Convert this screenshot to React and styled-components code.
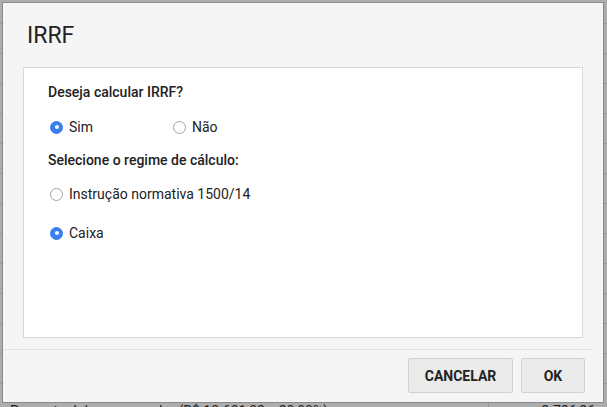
import React from "react";
import styled, { createGlobalStyle } from "styled-components";

const GlobalStyle = createGlobalStyle`
  html, body {
    margin: 0;
    padding: 0;
    width: 607px;
    height: 407px;
    overflow: hidden;
    font-family: Roboto, "Liberation Sans", sans-serif;
  }
`;

const Page = styled.div`
  position: relative;
  width: 607px;
  height: 407px;
  overflow: hidden;
  background: #ffffff;
`;

const Table = styled.div`
  display: flex;
  flex-direction: column;
`;

const HeadRow = styled.div`
  height: 24px;
  border-bottom: 1px solid #e2e2e2;
  box-sizing: border-box;
`;

const Row = styled.div`
  display: flex;
  height: 30px;
  box-sizing: border-box;
  border-bottom: 1px solid #e2e2e2;
  font-size: 14px;
  color: #333;
  padding-top: ${(p) => (p.$low ? "19px" : "8px")};
`;

const Cell = styled.div`
  flex: 1;
  padding-left: 10px;
`;

const NumCell = styled.div`
  width: 106px;
  border-left: 1px solid #e2e2e2;
  text-align: right;
  padding-right: 12px;
`;

const Overlay = styled.div`
  position: absolute;
  inset: 0;
  background: rgba(0, 0, 0, 0.32);
`;

const Dialog = styled.div`
  position: absolute;
  left: 2px;
  top: 2px;
  width: 602px;
  height: 401px;
  box-sizing: border-box;
  border: 1px solid #8a8a8a;
  background: #f5f5f5;
  display: flex;
  flex-direction: column;
`;

const Title = styled.h2`
  margin: 0;
  height: 64px;
  box-sizing: border-box;
  padding: 19px 0 0 24px;
  font-size: 23px;
  font-weight: 400;
  color: #222;
  line-height: 28px;
`;

const Panel = styled.div`
  margin: 0 20px;
  height: 271px;
  box-sizing: border-box;
  background: #fff;
  border: 1px solid #d8d8d8;
  padding: 14px 0 0 24px;
  display: flex;
  flex-direction: column;
`;

const Question = styled.div`
  font-size: 14px;
  font-weight: 500;
  color: #222;
  line-height: 20px;
  margin-bottom: ${(p) => p.$mb || "0px"};
`;

const Options = styled.div`
  display: flex;
  flex-direction: ${(p) => (p.$column ? "column" : "row")};
  gap: ${(p) => (p.$column ? "19px" : "0px")};
  margin-bottom: ${(p) => p.$mb || "0px"};
`;

const Option = styled.label`
  display: flex;
  align-items: center;
  width: ${(p) => p.$width || "auto"};
  height: 20px;
  font-size: 14px;
  color: #222;
  gap: 6px;
`;

const Radio = styled.span`
  width: 13px;
  height: 13px;
  border-radius: 50%;
  box-sizing: border-box;
  display: inline-flex;
  align-items: center;
  justify-content: center;
  margin-left: 2px;
  background: ${(p) => (p.$checked ? "#3a7ff2" : "#fff")};
  border: 1px solid ${(p) => (p.$checked ? "#3a7ff2" : "#a3a3a3")};

  &::after {
    content: "";
    width: 4px;
    height: 4px;
    border-radius: 50%;
    background: #fff;
    display: ${(p) => (p.$checked ? "block" : "none")};
  }
`;

const Footer = styled.div`
  margin-top: 11px;
  margin-right: 11px;
  border-top: 1px solid #e3e3e3;
  padding: 8px 7px 0 0;
  display: flex;
  justify-content: flex-end;
  gap: 8px;
`;

const Button = styled.button`
  width: ${(p) => p.$width};
  height: 35px;
  background: #ebebeb;
  border: 1px solid #d2d2d2;
  border-radius: 2px;
  font-family: Roboto, "Liberation Sans", sans-serif;
  font-size: 14px;
  font-weight: 700;
  color: #222;
  padding: 0;
`;

const RadioOption = ({ label, checked, width }) => (
  <Option $width={width}>
    <Radio $checked={checked} />
    {label}
  </Option>
);

const App = () => {
  const rows = Array.from({ length: 12 });
  return (
    <Page>
      <GlobalStyle />
      <Table>
        <HeadRow />
        {rows.map((_, i) => (
          <Row key={i}>
            <Cell />
            <NumCell />
          </Row>
        ))}
        <Row $low>
          <Cell>Percentual do empregador (R$ 13.631,32 x 20,00%)</Cell>
          <NumCell>2.726,26</NumCell>
        </Row>
      </Table>
      <Overlay />
      <Dialog>
        <Title>IRRF</Title>
        <Panel>
          <Question $mb="15px">Deseja calcular IRRF?</Question>
          <Options $mb="13px">
            <RadioOption label="Sim" checked width="123px" />
            <RadioOption label="Não" />
          </Options>
          <Question $mb="14px">Selecione o regime de cálculo:</Question>
          <Options $column>
            <RadioOption label="Instrução normativa 1500/14" />
            <RadioOption label="Caixa" checked />
          </Options>
        </Panel>
        <Footer>
          <Button $width="105px">CANCELAR</Button>
          <Button $width="64px">OK</Button>
        </Footer>
      </Dialog>
    </Page>
  );
};

export default App;
